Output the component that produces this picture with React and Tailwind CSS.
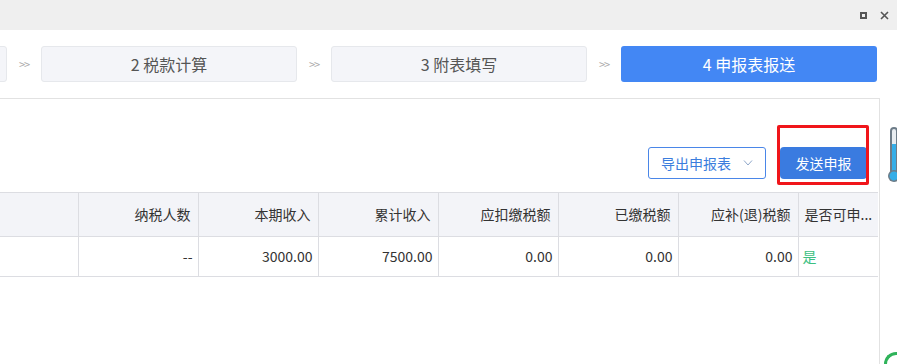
import React from "react";

const steps = [
  { label: "", active: false },
  { label: "2 税款计算", active: false },
  { label: "3 附表填写", active: false },
  { label: "4 申报表报送", active: true },
];

const cols = [
  { title: "", w: "w-[78px]", value: "" },
  { title: "纳税人数", w: "w-[120px]", value: "--" },
  { title: "本期收入", w: "w-[120px]", value: "3000.00" },
  { title: "累计收入", w: "w-[120px]", value: "7500.00" },
  { title: "应扣缴税额", w: "w-[120px]", value: "0.00" },
  { title: "已缴税额", w: "w-[120px]", value: "0.00" },
  { title: "应补(退)税额", w: "w-[120px]", value: "0.00" },
];

function Thermometer() {
  return (
    <svg width="14" height="58" viewBox="0 0 14 58" className="absolute left-[888px] top-[126px]">
      <rect x="2" y="1" width="8" height="48" rx="4" fill="#6d7c88" />
      <rect x="4" y="3" width="4" height="44" rx="2" fill="#e8edf1" />
      <rect x="4" y="18" width="4" height="30" fill="#35aee8" />
      <circle cx="6" cy="50" r="6" fill="#6d7c88" />
      <circle cx="6" cy="50" r="4.5" fill="#35aee8" />
    </svg>
  );
}

export default function App() {
  return (
    <div className="relative w-[897px] h-[364px] overflow-hidden bg-white font-['Noto_Sans_CJK_SC','Noto_Sans',sans-serif]">
      {/* window bar */}
      <div className="h-[30px] bg-[#efefef] flex items-center justify-end gap-[13px] pr-[8px]">
        <div className="w-[7px] h-[7px] border-2 border-[#555]" />
        <svg width="9" height="9" viewBox="0 0 9 9">
          <path d="M1 1 L8 8 M8 1 L1 8" stroke="#555" strokeWidth="1.6" />
        </svg>
      </div>

      {/* steps */}
      <div className="mt-[16px] ml-[-249px] flex items-center h-[36px]">
        {steps.map((s, i) => (
          <React.Fragment key={i}>
            {i > 0 && (
              <div className="w-[34px] text-center text-[11px] text-[#aaa] tracking-[-1px]">&gt;&gt;</div>
            )}
            <div
              className={
                s.active
                  ? "w-[256px] h-full shrink-0 flex items-center justify-center rounded-[3px] bg-[#4387f4] text-white text-[16px]"
                  : "w-[256px] h-full shrink-0 flex items-center justify-center rounded-[3px] bg-[#f4f5f9] border border-[#e6e8ec] text-[#555] text-[16px]"
              }
            >
              {s.label}
            </div>
          </React.Fragment>
        ))}
      </div>

      {/* panel */}
      <div className="mt-[16px] w-[880px] h-[266px] border-t border-r border-[#e2e2e2]">
        <div className="flex justify-end items-center gap-[14px] pr-[12px] pt-[48px]">
          <button className="w-[118px] h-[32px] flex items-center justify-center gap-[12px] border border-[#4a86e8] rounded-[3px] text-[#3b7ddd] text-[14px]">
            <span>导出申报表</span>
            <svg width="10" height="6" viewBox="0 0 10 6">
              <path d="M1 0.5 L5 5 L9 0.5" fill="none" stroke="#8fa7c9" strokeWidth="1" />
            </svg>
          </button>
          <div className="relative">
            <button className="w-[87px] h-[32px] rounded-[4px] bg-[#3a7be0] text-white text-[14px]">发送申报</button>
            <div className="absolute left-[-3px] top-[-22px] w-[92px] h-[60px] border-[3px] border-[#f0151a] rounded-[2px]" />
          </div>
        </div>

        <table className="mt-[13px] border-collapse text-[14px]">
          <thead>
            <tr className="h-[44px] bg-[#f3f4f8] text-[#333]">
              {cols.map((c, i) => (
                <th
                  key={i}
                  className={`${c.w} font-normal text-right pr-[7px] border-y border-[#dcdde2] ${i > 0 ? "border-l" : ""}`}
                >
                  {c.title}
                </th>
              ))}
              <th className="w-[80px] font-normal text-left pl-[6px] border-y border-l border-[#dcdde2]">是否可申...</th>
            </tr>
          </thead>
          <tbody>
            <tr className="h-[40px] text-[#333]">
              {cols.map((c, i) => (
                <td
                  key={i}
                  className={`${c.w} text-right pr-[5px] border-b border-[#dcdde2] ${i > 0 ? "border-l" : ""}`}
                >
                  {c.value}
                </td>
              ))}
              <td className="w-[80px] text-left pl-[4px] border-b border-l border-[#dcdde2] text-[#3cc081]">是</td>
            </tr>
          </tbody>
        </table>
      </div>

      <Thermometer />
      <div className="absolute left-[884px] top-[352px] w-[24px] h-[24px] rounded-full border-[3px] border-[#2fb35a] border-r-transparent border-b-transparent" />
    </div>
  );
}
